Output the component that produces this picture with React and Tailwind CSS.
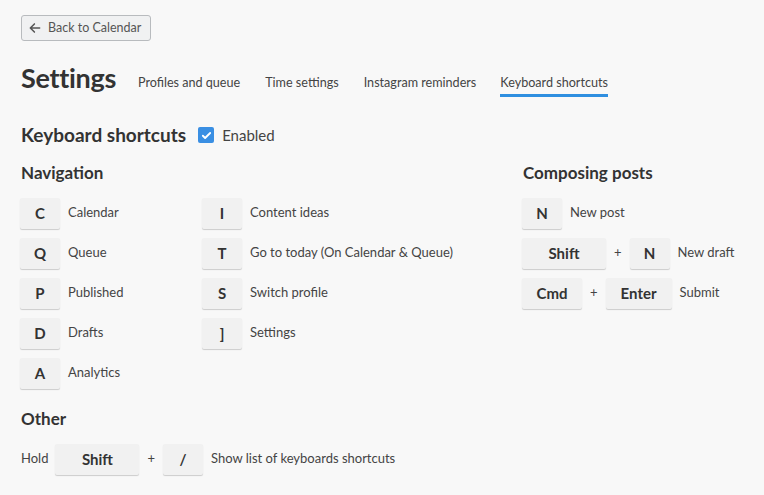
import React from "react";

const font = { fontFamily: 'Lato, "Noto Sans", sans-serif' };

function Key({ children, w = "w-[40px]" }) {
  return (
    <div
      className={`${w} h-[31px] flex items-center justify-center bg-[#f1f1f1] rounded-[2px] shadow-[0_1px_1px_rgba(0,0,0,0.18)] text-[15px] font-bold text-[#333]`}
    >
      {children}
    </div>
  );
}

function Row({ k, label }) {
  return (
    <div className="flex items-center h-[40px]">
      <Key>{k}</Key>
      <span className="ml-[8px] text-[13px] text-[#444]">{label}</span>
    </div>
  );
}

function Plus() {
  return <span className="text-[13px] text-[#444] mx-[8px]">+</span>;
}

export default function App() {
  return (
    <div style={font} className="min-h-[495px] bg-[#f8f8f8] text-[#333] pl-[21px] pt-[15px]">
      <button className="flex items-center h-[26px] w-[130px] border border-[#b8bbbe] bg-[#f0f1f2] rounded-[3px] pl-[6px] text-[12.5px] text-[#555] whitespace-nowrap">
        <svg width="14" height="14" viewBox="0 0 24 24" fill="none" stroke="#555" strokeWidth="2.6" strokeLinecap="round" strokeLinejoin="round">
          <path d="M20 12H5M11 5l-7 7 7 7" />
        </svg>
        <span className="ml-[6px]">Back to Calendar</span>
      </button>

      <div className="flex items-end mt-[16px] h-[40px]">
        <h1 className="text-[27px] font-bold leading-none text-[#333] mb-[6px] tracking-[-0.3px]">Settings</h1>
        <nav className="flex ml-[22px] text-[12.6px] text-[#444]">
          <div className="pb-[4px] mr-[25px]">Profiles and queue</div>
          <div className="pb-[4px] mr-[25px]">Time settings</div>
          <div className="pb-[4px] mr-[24px]">Instagram reminders</div>
          <div className="pb-[1px] border-b-[3px] border-[#2f8fe0]">Keyboard shortcuts</div>
        </nav>
      </div>

      <div className="flex items-center mt-[26px] h-[24px]">
        <h2 className="text-[19px] font-bold text-[#333]">Keyboard shortcuts</h2>
        <div className="ml-[12px] w-[16px] h-[16px] rounded-[2px] bg-[#3a8fe3] flex items-center justify-center">
          <svg width="11" height="11" viewBox="0 0 24 24" fill="none" stroke="white" strokeWidth="4" strokeLinecap="round" strokeLinejoin="round">
            <path d="M4 12.5l5 5L20 6.5" />
          </svg>
        </div>
        <span className="ml-[8px] text-[15px] text-[#444]">Enabled</span>
      </div>

      <div className="flex mt-[14px]">
        <div className="w-[502px]">
          <h3 className="text-[17px] font-bold h-[24px] leading-[24px]">Navigation</h3>
          <div className="flex mt-[8px] -ml-[1px]">
            <div className="w-[182px]">
              <Row k="C" label="Calendar" />
              <Row k="Q" label="Queue" />
              <Row k="P" label="Published" />
              <Row k="D" label="Drafts" />
              <Row k="A" label="Analytics" />
            </div>
            <div>
              <Row k="I" label="Content ideas" />
              <Row k="T" label="Go to today (On Calendar & Queue)" />
              <Row k="S" label="Switch profile" />
              <Row k="]" label="Settings" />
            </div>
          </div>
        </div>
        <div>
          <h3 className="text-[17px] font-bold h-[24px] leading-[24px]">Composing posts</h3>
          <div className="mt-[8px] -ml-[1px]">
            <Row k="N" label="New post" />
            <div className="flex items-center h-[40px]">
              <Key w="w-[84px]">Shift</Key>
              <Plus />
              <Key>N</Key>
              <span className="ml-[8px] text-[13px] text-[#444]">New draft</span>
            </div>
            <div className="flex items-center h-[40px]">
              <Key w="w-[60px]">Cmd</Key>
              <Plus />
              <Key w="w-[66px]">Enter</Key>
              <span className="ml-[8px] text-[13px] text-[#444]">Submit</span>
            </div>
          </div>
        </div>
      </div>

      <h3 className="text-[17px] font-bold h-[24px] leading-[24px] mt-[14px]">Other</h3>
      <div className="flex items-center h-[40px] mt-[8px]">
        <span className="text-[13px] text-[#444]">Hold</span>
        <div className="ml-[7px] flex items-center">
          <Key w="w-[84px]">Shift</Key>
          <Plus />
          <Key>/</Key>
          <span className="ml-[8px] text-[13px] text-[#444]">Show list of keyboards shortcuts</span>
        </div>
      </div>
    </div>
  );
}
